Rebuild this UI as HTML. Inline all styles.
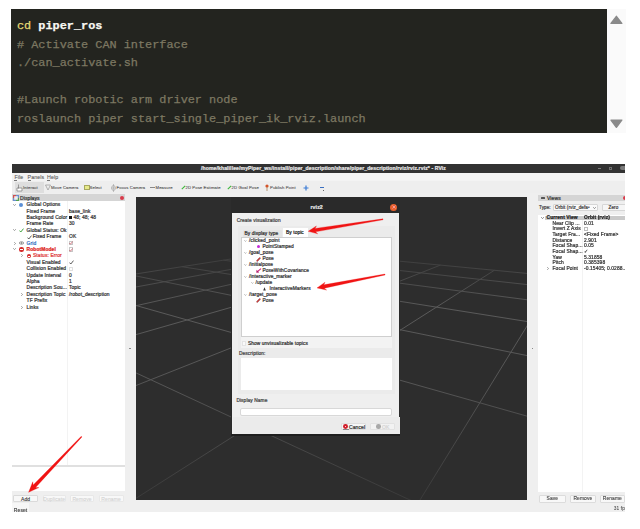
<!DOCTYPE html>
<html><head><meta charset="utf-8">
<style>
html,body{margin:0;padding:0;width:640px;height:529px;overflow:hidden;background:#fff;position:relative;font-family:"Liberation Sans",sans-serif;}
.a{position:absolute;}
.t{white-space:nowrap;line-height:1;letter-spacing:0.1px;-webkit-text-stroke:0.22px currentColor;}
#code{left:11px;top:9px;width:596px;height:124px;background:#23241f;}
#code pre{margin:0;position:absolute;font-family:"Liberation Mono",monospace;font-size:11.8px;line-height:18.5px;color:#7d7862;transform-origin:0 0;transform:scaleX(1.005);-webkit-text-stroke:0.25px currentColor;}
#sb{left:607px;top:9px;width:19px;height:124px;background:#fafafa;}
</style></head><body>
<div class="a" id="code">
<pre class="a" style="left:6px;top:8.3px;"><span style="color:#e6db74">cd</span> <span style="color:#f8f8f2;font-weight:bold">piper_ros</span>
# Activate CAN interface
./can_activate.sh

#Launch robotic arm driver node
roslaunch piper start_single_piper_ik_rviz.launch</pre>
</div>
<div class="a" id="sb">
<svg class="a" style="left:0;top:0" width="19" height="124"><path d="M9.4 7.3 L14.8 14.4 L4 14.4 Z" fill="#8a8a8a" stroke="#8a8a8a" stroke-width="1.4" stroke-linejoin="round"/><path d="M9.4 118.3 L14.8 111.1 L4 111.1 Z" fill="#8a8a8a" stroke="#8a8a8a" stroke-width="1.4" stroke-linejoin="round"/></svg>
</div>
<div class="a" style="left:0;top:0;width:640px;height:529px;filter:blur(0.35px)">
<div class="a" style="left:12px;top:164px;width:613px;height:348px;background:#efefef;"></div>
<div class="a" style="left:12px;top:164px;width:613px;height:9px;background:#323232;"></div>
<div class="a t" style="left:201px;top:166.10px;font-size:5.1px;color:#e8e8e8;font-weight:bold;">/home/khalillee/myPiper_ws/install/piper_description/share/piper_description/rviz/rviz.rviz* - RViz</div>
<div class="a" style="left:598.3px;top:168.2px;width:3px;height:0.6px;background:#7a7a7a;"></div>
<div class="a" style="left:609px;top:166.6px;width:3px;height:3px;background:transparent;border:0.5px solid #6e6e6e;box-sizing:border-box"></div>
<div class="a" style="left:619.7px;top:165.8px;width:5.3px;height:4.6px;background:#7a7a7a;border-radius:2.3px 0 0 2.3px"></div>
<div class="a" style="left:12px;top:173px;width:613px;height:8px;background:#f3f3f3;"></div>
<div class="a t" style="left:14.4px;top:175.40px;font-size:5.3px;color:#555;-webkit-text-stroke:0.08px currentColor">File</div>
<div class="a" style="left:14.4px;top:179.6px;width:2.6px;height:0.4px;background:#777;"></div>
<div class="a t" style="left:27.5px;top:175.40px;font-size:5.3px;color:#555;-webkit-text-stroke:0.08px currentColor">Panels</div>
<div class="a" style="left:27.5px;top:179.6px;width:3px;height:0.4px;background:#777;"></div>
<div class="a t" style="left:47px;top:175.40px;font-size:5.3px;color:#555;-webkit-text-stroke:0.08px currentColor">Help</div>
<div class="a" style="left:47px;top:179.6px;width:3px;height:0.4px;background:#777;"></div>
<div class="a" style="left:12px;top:181px;width:613px;height:12px;background:#eeeeee;"></div>
<div class="a" style="left:15px;top:182px;width:29px;height:11px;background:#dedede;"></div>
<svg class="a" style="left:16px;top:183px" width="8" height="9"><path d="M2.5 1.5 v4 M1 5 h5 v3 h-5z" stroke="#666" stroke-width="0.6" fill="#fff"/></svg>
<div class="a t" style="left:23px;top:186.34px;font-size:4.2px;color:#4a4a4a;-webkit-text-stroke:0.08px currentColor">Interact</div>
<div class="a t" style="left:51px;top:186.34px;font-size:4.2px;color:#4a4a4a;-webkit-text-stroke:0.08px currentColor">Move Camera</div>
<svg class="a" style="left:45px;top:184px" width="6" height="7"><path d="M0.5 1 L5.5 1 L3 6 Z" stroke="#888" stroke-width="0.6" fill="none"/></svg>
<div class="a" style="left:84.3px;top:185.4px;width:5.8px;height:4.2px;background:#e6ea8a;border:0.5px solid #a8a860;box-sizing:border-box"></div>
<div class="a t" style="left:89.6px;top:186.34px;font-size:4.2px;color:#4a4a4a;-webkit-text-stroke:0.08px currentColor">Select</div>
<svg class="a" style="left:111px;top:183.5px" width="5" height="8"><ellipse cx="2.5" cy="4" rx="1.8" ry="2.6" stroke="#999" stroke-width="0.6" fill="none"/><path d="M2.5 0 v8 M0 4 h5" stroke="#999" stroke-width="0.5"/></svg>
<div class="a t" style="left:116.6px;top:186.34px;font-size:4.2px;color:#4a4a4a;-webkit-text-stroke:0.08px currentColor">Focus Camera</div>
<div class="a" style="left:150.4px;top:186.8px;width:4.8px;height:1.2px;background:#888;"></div>
<div class="a t" style="left:155.6px;top:186.34px;font-size:4.2px;color:#4a4a4a;-webkit-text-stroke:0.08px currentColor">Measure</div>
<svg class="a" style="left:180.5px;top:185px" width="5" height="5"><path d="M0.8 4.2 L4.2 0.8" stroke="#3cb83c" stroke-width="1.1"/></svg>
<div class="a t" style="left:185.5px;top:186.34px;font-size:4.2px;color:#4a4a4a;-webkit-text-stroke:0.08px currentColor">2D Pose Estimate</div>
<svg class="a" style="left:226.5px;top:185px" width="5" height="5"><path d="M0.8 4.2 L4.2 0.8" stroke="#3cb83c" stroke-width="1.1"/></svg>
<div class="a t" style="left:231.6px;top:186.34px;font-size:4.2px;color:#4a4a4a;-webkit-text-stroke:0.08px currentColor">2D Goal Pose</div>
<svg class="a" style="left:265px;top:184px" width="4" height="7"><circle cx="2" cy="2" r="1.6" fill="#d4542a"/><path d="M2 3 v4" stroke="#a07040" stroke-width="0.7"/></svg>
<div class="a t" style="left:270px;top:186.34px;font-size:4.2px;color:#4a4a4a;-webkit-text-stroke:0.08px currentColor">Publish Point</div>
<svg class="a" style="left:302.5px;top:184.5px" width="6" height="6"><path d="M3 0.5 v5 M0.5 3 h5" stroke="#3a7bd5" stroke-width="1.2"/></svg>
<div class="a" style="left:319.5px;top:186.8px;width:4.5px;height:1.2px;background:#3a6fc0;"></div>
<div class="a" style="left:323px;top:189.5px;width:1px;height:1px;background:#666;"></div>
<div class="a" style="left:12px;top:194px;width:113px;height:7px;background:#d5d5d5;"></div>
<svg class="a" style="left:12.5px;top:194.5px" width="6" height="6"><rect x="0" y="0" width="6" height="6" fill="#6a8fd0"/><rect x="0" y="0" width="3" height="3" fill="#d05050"/><rect x="3" y="3" width="3" height="3" fill="#50a050"/><rect x="1.2" y="1.2" width="3.6" height="3.6" fill="#eee"/></svg>
<div class="a t" style="left:20px;top:196.15px;font-size:5.0px;color:#333;">Displays</div>
<div class="a" style="left:119.5px;top:195.5px;width:4.2px;height:4.2px;background:#d83a4a;border-radius:50%"></div>
<div class="a" style="left:12px;top:201px;width:113px;height:264px;background:#ffffff;"></div>
<div class="a" style="left:67.2px;top:201px;width:0.6px;height:264px;background:#f3f3f3;"></div>
<div class="a" style="left:12px;top:465px;width:113px;height:1.5px;background:#e0e0e0;"></div>
<div class="a" style="left:12px;top:466.6px;width:113px;height:24.6px;background:#ffffff;"></div>
<svg class="a" style="left:13.3px;top:203.5px" width="3" height="2"><path d="M0.2 0.2 L1.5 1.6 L2.8 0.2" stroke="#777" stroke-width="0.7" fill="none"/></svg>
<div class="a" style="left:19.3px;top:202.6px;width:4.2px;height:4.2px;background:#5b8fd6;border-radius:50%"></div>
<div class="a t" style="left:26.6px;top:203.10px;font-size:4.9px;color:#333;">Global Options</div>
<div class="a t" style="left:26.6px;top:209.50px;font-size:4.9px;color:#333;">Fixed Frame</div>
<div class="a t" style="left:69px;top:209.50px;font-size:4.9px;color:#333;">base_link</div>
<div class="a t" style="left:26.6px;top:215.90px;font-size:4.9px;color:#333;">Background Color</div>
<div class="a t" style="left:69px;top:215.90px;font-size:4.9px;color:#333;">&nbsp;&nbsp;&nbsp;48; 48; 48</div>
<div class="a t" style="left:26.6px;top:222.30px;font-size:4.9px;color:#333;">Frame Rate</div>
<div class="a t" style="left:69px;top:222.30px;font-size:4.9px;color:#333;">30</div>
<svg class="a" style="left:13.3px;top:229.10000000000002px" width="3" height="2"><path d="M0.2 0.2 L1.5 1.6 L2.8 0.2" stroke="#777" stroke-width="0.7" fill="none"/></svg>
<svg class="a" style="left:19px;top:228.10000000000002px" width="5" height="5"><path d="M0.5 2.6 L1.8 4 L4.5 0.6" stroke="#2c9a2c" stroke-width="0.9" fill="none"/></svg>
<div class="a t" style="left:26.6px;top:228.70px;font-size:4.9px;color:#333;">Global Status: Ok</div>
<svg class="a" style="left:27px;top:234.5px" width="5" height="5"><path d="M0.5 2.6 L1.8 4 L4.5 0.6" stroke="#333" stroke-width="0.8" fill="none"/></svg>
<div class="a t" style="left:32.7px;top:235.10px;font-size:4.9px;color:#333;">Fixed Frame</div>
<div class="a t" style="left:69px;top:235.10px;font-size:4.9px;color:#333;">OK</div>
<svg class="a" style="left:13.700000000000001px;top:241.6px" width="2" height="3"><path d="M0.2 0.2 L1.6 1.5 L0.2 2.8" stroke="#777" stroke-width="0.7" fill="none"/></svg>
<svg class="a" style="left:18.8px;top:241.29999999999998px" width="5" height="4"><ellipse cx="2.5" cy="2" rx="2.2" ry="1.3" fill="none" stroke="#666" stroke-width="0.6"/><circle cx="2.5" cy="2" r="0.8" fill="#666"/></svg>
<div class="a t" style="left:26.6px;top:241.50px;font-size:4.9px;color:#2f6fc0;">Grid</div>
<div class="a" style="left:68.8px;top:240.9px;width:4.4px;height:4.4px;background:#fff;border:0.5px solid #c8c8c8;box-sizing:border-box"></div>
<svg class="a" style="left:69.2px;top:241.29999999999998px" width="4" height="4"><path d="M0.4 2 L1.5 3.2 L3.6 0.5" stroke="#c03040" stroke-width="0.6" fill="none"/></svg>
<svg class="a" style="left:13.3px;top:248.3px" width="3" height="2"><path d="M0.2 0.2 L1.5 1.6 L2.8 0.2" stroke="#777" stroke-width="0.7" fill="none"/></svg>
<div class="a" style="left:19.3px;top:247.2px;width:4.6px;height:4.6px;background:#d42a2a;border-radius:50%"></div>
<div class="a" style="left:20.3px;top:249.1px;width:2.6px;height:0.8px;background:#fff;"></div>
<div class="a t" style="left:26.6px;top:247.90px;font-size:4.9px;color:#d22;font-weight:bold;">RobotModel</div>
<div class="a" style="left:68.8px;top:247.3px;width:4.4px;height:4.4px;background:#fff;border:0.5px solid #c8c8c8;box-sizing:border-box"></div>
<svg class="a" style="left:69.2px;top:247.7px" width="4" height="4"><path d="M0.4 2 L1.5 3.2 L3.6 0.5" stroke="#c03040" stroke-width="0.6" fill="none"/></svg>
<svg class="a" style="left:20.7px;top:254.4px" width="2" height="3"><path d="M0.2 0.2 L1.6 1.5 L0.2 2.8" stroke="#777" stroke-width="0.7" fill="none"/></svg>
<div class="a" style="left:26.8px;top:253.6px;width:4.6px;height:4.6px;background:#d42a2a;border-radius:50%"></div>
<div class="a" style="left:27.8px;top:255.5px;width:2.6px;height:0.8px;background:#fff;"></div>
<div class="a t" style="left:33px;top:254.30px;font-size:4.9px;color:#d33;">Status: Error</div>
<div class="a t" style="left:26.6px;top:260.70px;font-size:4.9px;color:#333;">Visual Enabled</div>
<svg class="a" style="left:69px;top:260.1px" width="5" height="5"><path d="M0.5 2.6 L1.8 4 L4.5 0.6" stroke="#333" stroke-width="0.8" fill="none"/></svg>
<div class="a t" style="left:26.6px;top:267.10px;font-size:4.9px;color:#333;">Collision Enabled</div>
<div class="a" style="left:68.8px;top:266.5px;width:4.4px;height:4.4px;background:#fff;border:0.5px solid #e0e0e0;box-sizing:border-box"></div>
<div class="a t" style="left:26.6px;top:273.50px;font-size:4.9px;color:#333;">Update Interval</div>
<div class="a t" style="left:69px;top:273.50px;font-size:4.9px;color:#333;">0</div>
<div class="a t" style="left:26.6px;top:279.90px;font-size:4.9px;color:#333;">Alpha</div>
<div class="a t" style="left:69px;top:279.90px;font-size:4.9px;color:#333;">1</div>
<div class="a t" style="left:26.6px;top:286.30px;font-size:4.9px;color:#333;">Description Sou...</div>
<div class="a t" style="left:69px;top:286.30px;font-size:4.9px;color:#333;">Topic</div>
<svg class="a" style="left:20.7px;top:292.8px" width="2" height="3"><path d="M0.2 0.2 L1.6 1.5 L0.2 2.8" stroke="#777" stroke-width="0.7" fill="none"/></svg>
<div class="a t" style="left:26.6px;top:292.70px;font-size:4.9px;color:#333;">Description Topic</div>
<div class="a t" style="left:69px;top:292.70px;font-size:4.9px;color:#333;">/robot_description</div>
<div class="a t" style="left:26.6px;top:299.10px;font-size:4.9px;color:#333;">TF Prefix</div>
<svg class="a" style="left:20.7px;top:305.6px" width="2" height="3"><path d="M0.2 0.2 L1.6 1.5 L0.2 2.8" stroke="#777" stroke-width="0.7" fill="none"/></svg>
<div class="a t" style="left:26.6px;top:305.50px;font-size:4.9px;color:#333;">Links</div>
<div class="a" style="left:69.2px;top:215.6px;width:3.2px;height:3.2px;background:#111;"></div>
<div class="a" style="left:13px;top:494.7px;width:25.299999999999997px;height:7.7px;background:#f8f8f8;border:0.5px solid #dadada;box-sizing:border-box;border-radius:1px"></div>
<div class="a t" style="left:25.65px;top:496.95px;font-size:5.0px;color:#333;transform:translateX(-50%);-webkit-text-stroke:0.1px currentColor">Add</div>
<div class="a" style="left:42.7px;top:494.7px;width:22.89999999999999px;height:7.7px;background:#f8f8f8;border:0.5px solid #e8e8e8;box-sizing:border-box;border-radius:1px"></div>
<div class="a t" style="left:54.15px;top:496.95px;font-size:5.0px;color:#d2d2d2;transform:translateX(-50%);-webkit-text-stroke:0.1px currentColor">Duplicate</div>
<div class="a" style="left:70px;top:494.7px;width:24px;height:7.7px;background:#f8f8f8;border:0.5px solid #e8e8e8;box-sizing:border-box;border-radius:1px"></div>
<div class="a t" style="left:82.0px;top:496.95px;font-size:5.0px;color:#d2d2d2;transform:translateX(-50%);-webkit-text-stroke:0.1px currentColor">Remove</div>
<div class="a" style="left:98.5px;top:494.7px;width:25.099999999999994px;height:7.7px;background:#f8f8f8;border:0.5px solid #e8e8e8;box-sizing:border-box;border-radius:1px"></div>
<div class="a t" style="left:111.05px;top:496.95px;font-size:5.0px;color:#d2d2d2;transform:translateX(-50%);-webkit-text-stroke:0.1px currentColor">Rename</div>
<div class="a" style="left:12px;top:503px;width:17px;height:9px;background:#f7f7f7;"></div>
<div class="a t" style="left:13.8px;top:507.55px;font-size:5.0px;color:#3a3a3a;-webkit-text-stroke:0.12px currentColor">Reset</div>
<div class="a" style="left:129.2px;top:347.8px;width:1.5px;height:1.5px;background:#8a8a8a;"></div>
<div class="a" style="left:531.7px;top:347.8px;width:1.5px;height:1.5px;background:#8a8a8a;"></div>
<div class="a" style="left:136px;top:197px;width:391px;height:303px;background:#2d2d2d;"></div>
<svg class="a" style="left:136px;top:197px" width="391" height="303" viewBox="136 197 391 303"><defs><linearGradient id="gf" gradientUnits="userSpaceOnUse" x1="0" y1="245" x2="0" y2="500"><stop offset="0" stop-color="#363636"/><stop offset="0.25" stop-color="#5a5a5a"/><stop offset="0.55" stop-color="#555555"/><stop offset="1" stop-color="#3a3a3a"/></linearGradient></defs><g stroke="url(#gf)" stroke-width="1" fill="none"><line x1="-1179.4" y1="481.0" x2="286.1" y2="250.3"/><line x1="-1179.4" y1="481.0" x2="-31420.7" y2="9486.2"/><line x1="-1621.8" y1="612.8" x2="317.7" y2="253.3"/><line x1="-617.0" y1="392.5" x2="-18620.0" y2="9486.2"/><line x1="-2846.4" y1="977.4" x2="353.3" y2="256.8"/><line x1="-324.3" y1="346.4" x2="-5819.3" y2="9486.2"/><line x1="-22710.6" y1="6892.6" x2="393.9" y2="260.6"/><line x1="-144.7" y1="318.1" x2="6981.4" y2="9486.2"/><line x1="-22867.2" y1="9486.2" x2="440.4" y2="265.1"/><line x1="-23.3" y1="299.0" x2="19782.1" y2="9486.2"/><line x1="-13987.8" y1="9486.2" x2="494.3" y2="270.3"/><line x1="64.2" y1="285.2" x2="8917.7" y2="2790.3"/><line x1="-5108.4" y1="9486.2" x2="557.6" y2="276.3"/><line x1="130.3" y1="274.8" x2="2189.0" y2="693.9"/><line x1="3771.0" y1="9486.2" x2="632.9" y2="283.6"/><line x1="182.0" y1="266.7" x2="1480.2" y2="473.0"/><line x1="12650.3" y1="9486.2" x2="723.9" y2="292.3"/><line x1="223.5" y1="260.2" x2="1209.5" y2="388.7"/><line x1="21529.7" y1="9486.2" x2="836.3" y2="303.1"/><line x1="257.6" y1="254.8" x2="1066.7" y2="344.2"/><line x1="30409.1" y1="9486.2" x2="978.4" y2="316.7"/><line x1="286.1" y1="250.3" x2="978.4" y2="316.7"/></g></svg>
<div class="a" style="left:538px;top:194.7px;width:87px;height:6.6px;background:#d5d5d5;"></div>
<div class="a" style="left:540.5px;top:196.9px;width:4.2px;height:2.4px;background:#555;border-radius:0.5px"></div>
<div class="a t" style="left:547px;top:196.35px;font-size:5.0px;color:#333;">Views</div>
<div class="a" style="left:622.8px;top:195.8px;width:2.2px;height:4px;background:#d83a4a;border-radius:2px 0 0 2px"></div>
<div class="a t" style="left:539px;top:206.15px;font-size:4.6px;color:#444;">Type:</div>
<div class="a" style="left:552.7px;top:204px;width:45.3px;height:7px;background:#fafafa;border:0.5px solid #d6d6d6;box-sizing:border-box;border-radius:1px"></div>
<div class="a t" style="left:555px;top:206.15px;font-size:4.6px;color:#444;">Orbit (rviz_defa&#8226;</div>
<svg class="a" style="left:593.3px;top:206.8px" width="3" height="2"><path d="M0.2 0.2 L1.5 1.6 L2.8 0.2" stroke="#666" stroke-width="0.7" fill="none"/></svg>
<div class="a" style="left:601.8px;top:203.8px;width:24px;height:7.6px;background:#f6f6f6;border:0.5px solid #d6d6d6;box-sizing:border-box;border-radius:1px"></div>
<div class="a t" style="left:608.5px;top:206.15px;font-size:4.6px;color:#444;">Zero</div>
<div class="a" style="left:538px;top:214.6px;width:87px;height:277.4px;background:#ffffff;"></div>
<div class="a" style="left:545px;top:215.5px;width:80px;height:4.8px;background:#cacaca;"></div>
<svg class="a" style="left:540.8px;top:216.8px" width="3" height="2"><path d="M0.2 0.2 L1.5 1.6 L2.8 0.2" stroke="#555" stroke-width="0.7" fill="none"/></svg>
<div class="a t" style="left:546.5px;top:216.20px;font-size:4.9px;color:#222;font-weight:bold;">Current View</div>
<div class="a t" style="left:584px;top:216.20px;font-size:4.9px;color:#222;font-weight:bold;">Orbit (rviz)</div>
<div class="a" style="left:582.3px;top:220.3px;width:0.6px;height:272px;background:#f3f3f3;"></div>
<div class="a t" style="left:552.5px;top:221.70px;font-size:4.9px;color:#333;">Near Clip ...</div>
<div class="a t" style="left:584px;top:221.70px;font-size:4.9px;color:#333;">0.01</div>
<div class="a t" style="left:552.5px;top:227.38px;font-size:4.9px;color:#333;">Invert Z Axis</div>
<div class="a" style="left:584px;top:226.98000000000002px;width:4px;height:4px;background:transparent;border:0.5px solid #bbb;box-sizing:border-box"></div>
<div class="a t" style="left:552.5px;top:233.06px;font-size:4.9px;color:#333;">Target Fra...</div>
<div class="a t" style="left:584px;top:233.06px;font-size:4.9px;color:#333;">&lt;Fixed Frame&gt;</div>
<div class="a t" style="left:552.5px;top:238.74px;font-size:4.9px;color:#333;">Distance</div>
<div class="a t" style="left:584px;top:238.74px;font-size:4.9px;color:#333;">2.901</div>
<div class="a t" style="left:552.5px;top:244.42px;font-size:4.9px;color:#333;">Focal Shap...</div>
<div class="a t" style="left:584px;top:244.42px;font-size:4.9px;color:#333;">0.05</div>
<div class="a t" style="left:552.5px;top:250.10px;font-size:4.9px;color:#333;">Focal Shap...</div>
<div class="a t" style="left:584px;top:250.10px;font-size:4.9px;color:#333;">&#10003;</div>
<div class="a t" style="left:552.5px;top:255.78px;font-size:4.9px;color:#333;">Yaw</div>
<div class="a t" style="left:584px;top:255.78px;font-size:4.9px;color:#333;">5.31858</div>
<div class="a t" style="left:552.5px;top:261.46px;font-size:4.9px;color:#333;">Pitch</div>
<div class="a t" style="left:584px;top:261.46px;font-size:4.9px;color:#333;">0.385398</div>
<div class="a t" style="left:552.5px;top:267.14px;font-size:4.9px;color:#333;">Focal Point</div>
<div class="a t" style="left:584px;top:267.14px;font-size:4.9px;color:#333;">-0.15405; 0.0288...</div>
<svg class="a" style="left:547px;top:267.24px" width="2" height="3"><path d="M0.2 0.2 L1.6 1.5 L0.2 2.8" stroke="#777" stroke-width="0.7" fill="none"/></svg>
<div class="a" style="left:538.8px;top:495px;width:27.200000000000045px;height:8px;background:#f8f8f8;border:0.5px solid #dcdcdc;box-sizing:border-box;border-radius:1px"></div>
<div class="a t" style="left:552.4px;top:497.40px;font-size:4.9px;color:#3a3a3a;transform:translateX(-50%);-webkit-text-stroke:0.1px currentColor">Save</div>
<div class="a" style="left:569.7px;top:495px;width:26.299999999999955px;height:8px;background:#f8f8f8;border:0.5px solid #dcdcdc;box-sizing:border-box;border-radius:1px"></div>
<div class="a t" style="left:582.85px;top:497.40px;font-size:4.9px;color:#3a3a3a;transform:translateX(-50%);-webkit-text-stroke:0.1px currentColor">Remove</div>
<div class="a" style="left:599.7px;top:495px;width:25.299999999999955px;height:8px;background:#f8f8f8;border:0.5px solid #dcdcdc;box-sizing:border-box;border-radius:1px"></div>
<div class="a t" style="left:612.35px;top:497.40px;font-size:4.9px;color:#3a3a3a;transform:translateX(-50%);-webkit-text-stroke:0.1px currentColor">Rename</div>
<div class="a t" style="left:613.8px;top:506.85px;font-size:4.8px;color:#444;-webkit-text-stroke:0.05px currentColor">31 fps</div>
<div class="a" style="left:625px;top:160px;width:15px;height:360px;background:#ffffff;"></div>
<div class="a" style="left:231px;top:434px;width:169px;height:1.6px;background:#1e1e1e;"></div>
<div class="a" style="left:231px;top:197px;width:169px;height:237px;background:#2a2a2a;"></div>
<div class="a t" style="left:310.5px;top:205.05px;font-size:5.2px;color:#e6e6e6;font-weight:bold;">rviz2</div>
<div class="a" style="left:390.1px;top:203.5px;width:7px;height:7px;background:#e8602c;border-radius:50%"></div>
<svg class="a" style="left:391.6px;top:205px" width="4" height="4"><path d="M0.5 0.5 L3.5 3.5 M3.5 0.5 L0.5 3.5" stroke="#fbd" stroke-width="0.6"/></svg>
<div class="a" style="left:232.2px;top:213px;width:167.3px;height:220.8px;background:#efefef;"></div>
<div class="a t" style="left:236.8px;top:218.65px;font-size:4.8px;color:#444;">Create visualization</div>
<div class="a" style="left:238px;top:226px;width:157px;height:168px;background:#ebebeb;"></div>
<div class="a" style="left:242.6px;top:230px;width:39.4px;height:7.5px;background:#e4e4e4;border-radius:1px 1px 0 0"></div>
<div class="a t" style="left:244.5px;top:231.85px;font-size:4.8px;color:#333;">By display type</div>
<div class="a" style="left:282.7px;top:227.9px;width:25.5px;height:9.3px;background:#ffffff;"></div>
<div class="a t" style="left:286px;top:231.45px;font-size:4.8px;color:#222;">By topic</div>
<div class="a" style="left:241.2px;top:337px;width:150.4px;height:10.5px;background:#f3f3f3;"></div>
<div class="a" style="left:241.2px;top:237.4px;width:150.4px;height:100px;background:#ffffff;border:0.5px solid #cfcfcf;box-sizing:border-box"></div>
<svg class="a" style="left:244.3px;top:240.1px" width="3" height="2"><path d="M0.3 0.3 L1.4 1.4 L2.5 0.3" stroke="#888" stroke-width="0.6" fill="none"/></svg>
<div class="a t" style="left:249.1px;top:239.45px;font-size:4.8px;color:#333;">/clicked_point</div>
<div class="a" style="left:256.6px;top:244.7px;width:3.8px;height:3.8px;background:#c42bd8;border-radius:50%"></div>
<div class="a t" style="left:262.5px;top:245.05px;font-size:4.8px;color:#333;">PointStamped</div>
<svg class="a" style="left:244.3px;top:251.7px" width="3" height="2"><path d="M0.3 0.3 L1.4 1.4 L2.5 0.3" stroke="#888" stroke-width="0.6" fill="none"/></svg>
<div class="a t" style="left:249.1px;top:251.05px;font-size:4.8px;color:#333;">/goal_pose</div>
<svg class="a" style="left:256px;top:256.5px" width="5" height="5"><path d="M0.8 4.2 L4.2 0.8" stroke="#7a2020" stroke-width="1.5"/><path d="M0.8 4.2 L4.2 0.8" stroke="#f03838" stroke-width="0.8"/></svg>
<div class="a t" style="left:262.5px;top:257.25px;font-size:4.8px;color:#333;">Pose</div>
<svg class="a" style="left:244.3px;top:264.0px" width="3" height="2"><path d="M0.3 0.3 L1.4 1.4 L2.5 0.3" stroke="#888" stroke-width="0.6" fill="none"/></svg>
<div class="a t" style="left:249.1px;top:263.35px;font-size:4.8px;color:#333;">/initialpose</div>
<svg class="a" style="left:255.5px;top:268.3px" width="6" height="5"><path d="M1.2 3.8 L5 0.6" stroke="#d0207a" stroke-width="1.1"/><path d="M0.3 4.7 L0.6 1.8 L3.2 4.4 Z" fill="#b01a6a"/></svg>
<div class="a t" style="left:262.5px;top:269.15px;font-size:4.8px;color:#333;">PoseWithCovariance</div>
<svg class="a" style="left:244.3px;top:275.70000000000005px" width="3" height="2"><path d="M0.3 0.3 L1.4 1.4 L2.5 0.3" stroke="#888" stroke-width="0.6" fill="none"/></svg>
<div class="a t" style="left:249.1px;top:275.05px;font-size:4.8px;color:#333;">/interactive_marker</div>
<svg class="a" style="left:250.8px;top:281.6px" width="3" height="2"><path d="M0.3 0.3 L1.4 1.4 L2.5 0.3" stroke="#888" stroke-width="0.6" fill="none"/></svg>
<div class="a t" style="left:255.6px;top:280.95px;font-size:4.8px;color:#333;">/update</div>
<svg class="a" style="left:263.2px;top:286.5px" width="3" height="4"><path d="M1.5 0.2 L2.8 3.6 L0.2 3.6 Z" fill="#333"/></svg>
<div class="a t" style="left:269.5px;top:286.95px;font-size:4.8px;color:#333;">InteractiveMarkers</div>
<svg class="a" style="left:244.3px;top:293.6px" width="3" height="2"><path d="M0.3 0.3 L1.4 1.4 L2.5 0.3" stroke="#888" stroke-width="0.6" fill="none"/></svg>
<div class="a t" style="left:249.1px;top:292.95px;font-size:4.8px;color:#333;">/target_pose</div>
<svg class="a" style="left:256px;top:298.2px" width="5" height="5"><path d="M0.8 4.2 L4.2 0.8" stroke="#7a2020" stroke-width="1.5"/><path d="M0.8 4.2 L4.2 0.8" stroke="#f03838" stroke-width="0.8"/></svg>
<div class="a t" style="left:262.5px;top:298.95px;font-size:4.8px;color:#333;">Pose</div>
<div class="a" style="left:241.5px;top:341.2px;width:4.5px;height:4.5px;background:#fafafa;border:0.5px solid #e4e4e4;box-sizing:border-box"></div>
<div class="a t" style="left:248px;top:342.05px;font-size:4.8px;color:#333;">Show unvisualizable topics</div>
<div class="a t" style="left:239px;top:351.65px;font-size:4.8px;color:#444;">Description:</div>
<div class="a" style="left:240.6px;top:358px;width:151.2px;height:32.2px;background:#ffffff;"></div>
<div class="a t" style="left:236.4px;top:399.05px;font-size:4.8px;color:#444;">Display Name</div>
<div class="a" style="left:239.6px;top:407.9px;width:152.2px;height:8.1px;background:#ffffff;border:0.5px solid #d8d8d8;box-sizing:border-box;border-radius:2px"></div>
<div class="a" style="left:232.5px;top:417px;width:167px;height:16.5px;background:#ebebeb;"></div>
<div class="a" style="left:341px;top:423px;width:25px;height:7.3px;background:#f6f6f6;border:0.5px solid #dedede;box-sizing:border-box;border-radius:1px"></div>
<div class="a" style="left:343.1px;top:424.1px;width:4.8px;height:4.8px;background:#d0202c;border-radius:50%"></div>
<div class="a" style="left:344.6px;top:426.2px;width:1.8px;height:0.8px;background:#ffd0d0;"></div>
<div class="a t" style="left:349px;top:425.05px;font-size:5.0px;color:#333;">Cancel</div>
<div class="a" style="left:342.5px;top:429.3px;width:6px;height:0.4px;background:#888;"></div>
<div class="a" style="left:370px;top:423px;width:25px;height:7.3px;background:#f2f2f2;border:0.5px solid #e2e2e2;box-sizing:border-box;border-radius:1px"></div>
<div class="a" style="left:376.2px;top:424.2px;width:4.6px;height:4.6px;background:#a8a8a8;border-radius:50%"></div>
<div class="a t" style="left:382px;top:425.05px;font-size:5.0px;color:#d4d4d4;">OK</div>
<svg class="a" style="left:0;top:0" width="640" height="529"><path d="M81.27 436.29 L33.16 485.04 L32.76 481.76 L28.60 492.30 L38.92 487.62 L35.62 487.39 L81.93 436.91 Z" fill="#f01414" stroke="#f01414" stroke-width="0.3" stroke-linejoin="round"/><path d="M382.93 218.86 L315.04 228.48 L316.45 225.92 L308.20 231.30 L317.72 233.82 L315.58 231.84 L383.07 219.74 Z" fill="#f01414" stroke="#f01414" stroke-width="0.3" stroke-linejoin="round"/><path d="M384.91 274.06 L323.74 284.84 L325.06 282.24 L317.00 287.90 L326.60 290.08 L324.39 288.18 L385.09 274.94 Z" fill="#f01414" stroke="#f01414" stroke-width="0.3" stroke-linejoin="round"/></svg>
</div>
</body></html>
